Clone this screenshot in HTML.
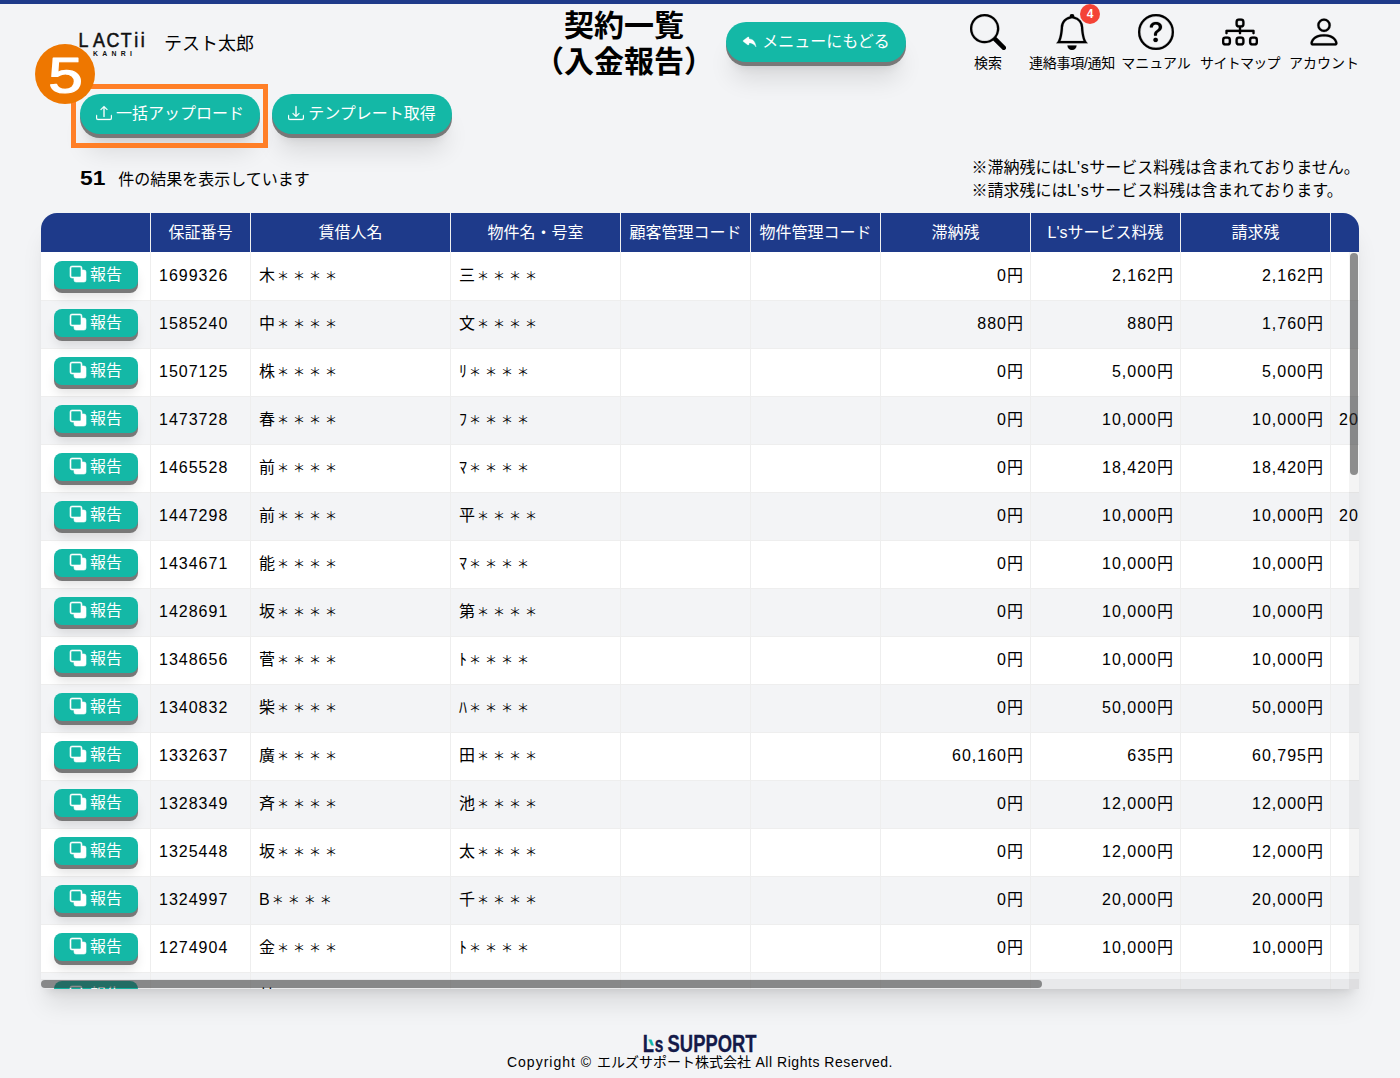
<!DOCTYPE html>
<html lang="ja">
<head>
<meta charset="utf-8">
<title>契約一覧（入金報告）</title>
<style>
*{box-sizing:border-box;}
html,body{margin:0;padding:0;}
body{width:1400px;height:1078px;overflow:hidden;position:relative;background:#f3f4f6;color:#000;
 font-family:"Liberation Sans","Noto Sans CJK JP",sans-serif;font-size:16px;line-height:24px;}
.abs{position:absolute;}
.topbar{left:0;top:0;width:1400px;height:4px;background:#1e3a8a;}
.logo{left:76px;top:28px;width:74px;height:32px;}
.uname{left:164px;top:31px;font-size:18px;line-height:26px;white-space:nowrap;}
.title{left:474px;top:7.500px;width:300px;text-align:center;font-size:30px;line-height:36px;font-weight:bold;color:#000;white-space:nowrap;}
.pill{height:40px;border-radius:20px;background:#14b8a6;color:#fff;white-space:nowrap;
 box-shadow:0 4px 0 #787878,0 22px 25px -5px rgba(0,0,0,.11),0 11px 10px -6px rgba(0,0,0,.1);
 display:flex;align-items:center;justify-content:center;font-size:16px;}
.pill svg{display:block;margin-right:4px;stroke:#fff;stroke-width:.350px;position:relative;top:-1px;}
.menu{left:726px;top:22px;width:180px;}
.up{left:80px;top:94px;width:180px;}
.dl{left:272px;top:94px;width:180px;}
.nav{top:14px;width:120px;text-align:center;font-size:14px;line-height:20px;white-space:nowrap;}
.nav svg{display:block;margin:0 auto 3px;}
.badge{left:1080px;top:3.500px;width:20px;height:20px;border-radius:10px;background:#f44336;color:#fff;font-size:12px;line-height:21px;font-weight:bold;text-align:center;}
.circ{left:35px;top:44px;width:60px;height:60px;border-radius:30px;background:#ee7700;}
.frame{left:71px;top:84px;width:197px;height:64px;border:5px solid #ff7f27;}
.count{left:80px;top:166px;white-space:nowrap;}
.count b{font-size:20px;display:inline-block;transform:scaleX(1.140);transform-origin:0 50%;margin-right:16px;}
.note{left:971.500px;top:157.200px;line-height:22.500px;white-space:nowrap;}
.wrap{left:41px;top:213px;width:1318px;height:776px;overflow:hidden;border-radius:16px 16px 0 0;background:#fff;
 box-shadow:0 20px 25px -5px rgba(0,0,0,.1),0 8px 10px -6px rgba(0,0,0,.1);}
table{border-collapse:separate;border-spacing:0;table-layout:fixed;width:1500px;}
th{height:39px;background:#1e3a8a;color:#fff;font-weight:normal;text-align:center;padding:0;border-right:1px solid #f0f0f0;white-space:nowrap;}
td{height:48px;padding:0 8px 1px;border-right:1px solid #eee;border-top:1px solid #eee;white-space:nowrap;overflow:hidden;}
tr.even td{background:#f3f4f6;}
tbody tr:first-child td{border-top:0;padding-top:1px;}
td.r{text-align:right;padding-right:7px;}
tr.last td.r{padding-top:6px;padding-bottom:0;}
td.c0{padding:0 0 2px 1px;text-align:center;overflow:visible;}
.n{letter-spacing:1px;}
.l{letter-spacing:.540px;}
.ls{letter-spacing:.600px;}
.a{font-size:12px;letter-spacing:4px;margin-left:2px;vertical-align:-.300px;line-height:0;}
.rbtn{display:inline-flex;align-items:center;justify-content:center;width:84px;height:28px;border-radius:8px;background:#14b8a6;color:#fff;
 box-shadow:0 4px 0 #787878,0 10px 12px -2px rgba(0,0,0,.12);position:relative;top:-.500px;vertical-align:middle;}
.rbtn svg{display:block;margin:0 3.500px 0 .500px;width:16px;height:16px;overflow:visible;stroke:#fff;stroke-width:.600px;stroke-linejoin:round;position:relative;top:-.700px;}
.vtrack{left:1308px;top:39px;width:10px;height:737px;background:rgba(0,0,0,.045);}
.vthumb{left:1309px;top:40px;width:8px;height:222px;border-radius:4px;background:rgba(50,50,50,.53);}
.htrack{left:0;top:766px;width:1318px;height:10px;background:rgba(0,0,0,.045);}
.hthumb{left:0;top:767px;width:1001px;height:8px;border-radius:4px;background:rgba(50,50,50,.53);}
.flogo{left:640px;top:1032px;width:120px;height:24px;}
.copy{left:0;top:1052px;width:1400px;text-align:center;font-size:14px;line-height:20px;white-space:nowrap;}
</style>
</head>
<body>
<div class="abs topbar"></div>

<svg class="abs logo" viewBox="0 0 74 32">
 <text transform="scale(.860 1)" x="3 19.900 35.400 52 67.700 75.300" y="19" font-family="Liberation Sans, sans-serif" font-size="20.700" fill="#111" stroke="#111" stroke-width=".600">LACTii</text>
 <text transform="translate(16.900 28) scale(.860 1)" font-family="Liberation Sans, sans-serif" font-size="8" font-weight="bold" fill="#111" textLength="45.300" lengthAdjust="spacing">KANRI</text>
</svg>
<div class="abs uname">テスト太郎</div>

<div class="abs title">契約一覧<br>（入金報告）</div>

<div class="abs pill menu"><svg viewBox="0 0 16 16" width="16" height="16"><path fill="#fff" d="M5.921 11.900 1.353 8.620a.719.719 0 0 1 0-1.238L5.921 4.100A.716.716 0 0 1 7 4.719V6c1.500 0 6 0 7 8-2.500-4.500-7-4-7-4v1.281c0 .56-.606.898-1.079.62z"/></svg><span>メニューにもどる</span></div>

<div class="abs nav" style="left:928px"><svg viewBox="0 0 16 16" width="36" height="36" stroke="#000" stroke-width=".080"><path fill="#000" d="M11.742 10.344a6.500 6.500 0 1 0-1.397 1.398h-.001c.03.040.062.078.098.115l3.850 3.850a1 1 0 0 0 1.415-1.414l-3.850-3.850a1.007 1.007 0 0 0-.115-.100zM12 6.500a5.500 5.500 0 1 1-11 0 5.500 5.500 0 0 1 11 0z"/></svg>検索</div>
<div class="abs nav" style="left:1012px"><svg viewBox="0 0 16 16" width="36" height="36" stroke="#000" stroke-width=".080"><path fill="#000" d="M8 16a2 2 0 0 0 2-2H6a2 2 0 0 0 2 2zM8 1.918l-.797.161A4.002 4.002 0 0 0 4 6c0 .628-.134 2.197-.459 3.742-.16.767-.376 1.566-.663 2.258h10.244c-.287-.692-.502-1.490-.663-2.258C12.134 8.197 12 6.628 12 6a4.002 4.002 0 0 0-3.203-3.920L8 1.917zM14.220 12c.223.447.481.801.780 1H1c.299-.199.557-.553.780-1C2.680 10.200 3 6.880 3 6c0-2.420 1.720-4.440 4.005-4.901a1 1 0 1 1 1.990 0A5.002 5.002 0 0 1 13 6c0 .880.320 4.200 1.220 6z"/></svg><span style="letter-spacing:-.250px">連絡事項/通知</span></div>
<div class="abs nav" style="left:1096px"><svg viewBox="0 0 16 16" width="36" height="36" stroke="#000" stroke-width=".080"><path fill="#000" d="M8 15A7 7 0 1 1 8 1a7 7 0 0 1 0 14zm0 1A8 8 0 1 0 8 0a8 8 0 0 0 0 16z"/><path fill="#000" d="M5.255 5.786a.237.237 0 0 0 .241.247h.825c.138 0 .248-.113.266-.250.090-.656.540-1.134 1.342-1.134.686 0 1.314.343 1.314 1.168 0 .635-.374.927-.965 1.371-.673.489-1.206 1.060-1.168 1.987l.003.217a.250.250 0 0 0 .250.246h.811a.250.250 0 0 0 .250-.250v-.105c0-.718.273-.927 1.010-1.486.609-.463 1.244-.977 1.244-2.056 0-1.511-1.276-2.241-2.673-2.241-1.267 0-2.655.590-2.750 2.286zm1.557 5.763c0 .533.425.927 1.010.927.609 0 1.028-.394 1.028-.927 0-.552-.420-.940-1.029-.940-.584 0-1.009.388-1.009.940z"/></svg>マニュアル</div>
<div class="abs nav" style="left:1180px"><svg viewBox="0 0 16 16" width="36" height="36" stroke="#000" stroke-width=".080"><path fill="#000" fill-rule="evenodd" d="M6 3.500A1.500 1.500 0 0 1 7.500 2h1A1.500 1.500 0 0 1 10 3.500v1A1.500 1.500 0 0 1 8.500 6v1H14a.500.500 0 0 1 .500.500v1a.500.500 0 0 1-1 0V8h-5v.500a.500.500 0 0 1-1 0V8h-5v.500a.500.500 0 0 1-1 0v-1A.500.500 0 0 1 2 7h5.500V6A1.500 1.500 0 0 1 6 4.500v-1zM8.500 5a.500.500 0 0 0 .500-.500v-1a.500.500 0 0 0-.500-.500h-1a.500.500 0 0 0-.500.500v1a.500.500 0 0 0 .500.500h1zM0 11.500A1.500 1.500 0 0 1 1.500 10h1A1.500 1.500 0 0 1 4 11.500v1A1.500 1.500 0 0 1 2.500 14h-1A1.500 1.500 0 0 1 0 12.500v-1zm1.500-.500a.500.500 0 0 0-.500.500v1a.500.500 0 0 0 .500.500h1a.500.500 0 0 0 .500-.500v-1a.500.500 0 0 0-.500-.500h-1zm4.500.500A1.500 1.500 0 0 1 7.500 10h1a1.500 1.500 0 0 1 1.500 1.500v1A1.500 1.500 0 0 1 8.500 14h-1A1.500 1.500 0 0 1 6 12.500v-1zm1.500-.500a.500.500 0 0 0-.500.500v1a.500.500 0 0 0 .500.500h1a.500.500 0 0 0 .500-.500v-1a.500.500 0 0 0-.500-.500h-1zm4.500.500a1.500 1.500 0 0 1 1.500-1.500h1a1.500 1.500 0 0 1 1.500 1.500v1a1.500 1.500 0 0 1-1.500 1.500h-1a1.500 1.500 0 0 1-1.500-1.500v-1zm1.500-.500a.500.500 0 0 0-.500.500v1a.500.500 0 0 0 .500.500h1a.500.500 0 0 0 .500-.500v-1a.500.500 0 0 0-.500-.500h-1z"/></svg><span style="letter-spacing:-.700px">サイトマップ</span></div>
<div class="abs nav" style="left:1264px"><svg viewBox="0 0 16 16" width="36" height="36" stroke="#000" stroke-width=".080"><path fill="#000" d="M8 8a3 3 0 1 0 0-6 3 3 0 0 0 0 6zm2-3a2 2 0 1 1-4 0 2 2 0 0 1 4 0zm4 8c0 1-1 1-1 1H3s-1 0-1-1 1-4 6-4 6 3 6 4zm-1-.004c-.001-.246-.154-.986-.832-1.664C11.516 10.680 10.289 10 8 10c-2.290 0-3.516.680-4.168 1.332-.678.678-.830 1.418-.832 1.664h10z"/></svg>アカウント</div>
<div class="abs badge">4</div>

<div class="abs pill up"><svg viewBox="0 0 16 16" width="16" height="16"><path fill="#fff" d="M.500 9.900a.500.500 0 0 1 .500.500v2.500a1 1 0 0 0 1 1h12a1 1 0 0 0 1-1v-2.500a.500.500 0 0 1 1 0v2.500a2 2 0 0 1-2 2H2a2 2 0 0 1-2-2v-2.500a.500.500 0 0 1 .500-.500z"/><path fill="#fff" d="M7.646 1.146a.500.500 0 0 1 .708 0l3 3a.500.500 0 0 1-.708.708L8.500 2.707V11.500a.500.500 0 0 1-1 0V2.707L5.354 4.854a.500.500 0 1 1-.708-.708l3-3z"/></svg><span>一括アップロード</span></div>
<div class="abs pill dl"><svg viewBox="0 0 16 16" width="16" height="16"><path fill="#fff" d="M.500 9.900a.500.500 0 0 1 .500.500v2.500a1 1 0 0 0 1 1h12a1 1 0 0 0 1-1v-2.500a.500.500 0 0 1 1 0v2.500a2 2 0 0 1-2 2H2a2 2 0 0 1-2-2v-2.500a.500.500 0 0 1 .500-.500z"/><path fill="#fff" d="M7.646 11.854a.500.500 0 0 0 .708 0l3-3a.500.500 0 0 0-.708-.708L8.500 10.293V1.500a.500.500 0 0 0-1 0v8.793L5.354 8.146a.500.500 0 1 0-.708.708l3 3z"/></svg><span>テンプレート取得</span></div>
<div class="abs frame"></div>
<div class="abs circ"></div>
<svg class="abs" style="left:35px;top:44px" width="60" height="60" viewBox="0 0 60 60"><text x="13.200" y="49.300" font-family="Liberation Sans, sans-serif" font-size="50" fill="#fff" stroke="#fff" stroke-width="1.200" stroke-linejoin="round" textLength="34.600" lengthAdjust="spacingAndGlyphs">5</text></svg>

<div class="abs count"><b>51</b>件の結果を表示しています</div>
<div class="abs note">※滞納残には<span class="ls">L's</span>サービス料残は含まれておりません。<br>※請求残には<span class="ls">L's</span>サービス料残は含まれております。</div>

<div class="abs wrap">
<table>
<colgroup><col style="width:110px"><col style="width:100px"><col style="width:200px"><col style="width:170px"><col style="width:130px"><col style="width:130px"><col style="width:150px"><col style="width:150px"><col style="width:150px"><col style="width:210px"></colgroup>
<thead><tr><th></th><th>保証番号</th><th>賃借人名</th><th>物件名・号室</th><th>顧客管理コード</th><th>物件管理コード</th><th>滞納残</th><th>L'sサービス料残</th><th>請求残</th><th></th></tr></thead>
<tbody>
<tr class="odd"><td class="c0"><span class="rbtn"><svg class="bi" viewBox="0 0 16 16" width="16" height="16"><path fill="#fff" d="M0 2a2 2 0 0 1 2-2h8a2 2 0 0 1 2 2v2h2a2 2 0 0 1 2 2v8a2 2 0 0 1-2 2H6a2 2 0 0 1-2-2v-2H2a2 2 0 0 1-2-2V2zm2-1a1 1 0 0 0-1 1v8a1 1 0 0 0 1 1h8a1 1 0 0 0 1-1V2a1 1 0 0 0-1-1H2z"/></svg><span class="rt">報告</span></span></td><td class="c1"><span class="n">1699326</span></td><td class="c2">木<span class="a">＊＊＊＊</span></td><td class="c3">三<span class="a">＊＊＊＊</span></td><td class="c4"></td><td class="c5"></td><td class="r"><span class="n">0</span>円</td><td class="r"><span class="n">2,162</span>円</td><td class="r"><span class="n">2,162</span>円</td><td class="c9"><span class="n"></span></td></tr>
<tr class="even"><td class="c0"><span class="rbtn"><svg class="bi" viewBox="0 0 16 16" width="16" height="16"><path fill="#fff" d="M0 2a2 2 0 0 1 2-2h8a2 2 0 0 1 2 2v2h2a2 2 0 0 1 2 2v8a2 2 0 0 1-2 2H6a2 2 0 0 1-2-2v-2H2a2 2 0 0 1-2-2V2zm2-1a1 1 0 0 0-1 1v8a1 1 0 0 0 1 1h8a1 1 0 0 0 1-1V2a1 1 0 0 0-1-1H2z"/></svg><span class="rt">報告</span></span></td><td class="c1"><span class="n">1585240</span></td><td class="c2">中<span class="a">＊＊＊＊</span></td><td class="c3">文<span class="a">＊＊＊＊</span></td><td class="c4"></td><td class="c5"></td><td class="r"><span class="n">880</span>円</td><td class="r"><span class="n">880</span>円</td><td class="r"><span class="n">1,760</span>円</td><td class="c9"><span class="n"></span></td></tr>
<tr class="odd"><td class="c0"><span class="rbtn"><svg class="bi" viewBox="0 0 16 16" width="16" height="16"><path fill="#fff" d="M0 2a2 2 0 0 1 2-2h8a2 2 0 0 1 2 2v2h2a2 2 0 0 1 2 2v8a2 2 0 0 1-2 2H6a2 2 0 0 1-2-2v-2H2a2 2 0 0 1-2-2V2zm2-1a1 1 0 0 0-1 1v8a1 1 0 0 0 1 1h8a1 1 0 0 0 1-1V2a1 1 0 0 0-1-1H2z"/></svg><span class="rt">報告</span></span></td><td class="c1"><span class="n">1507125</span></td><td class="c2">株<span class="a">＊＊＊＊</span></td><td class="c3">ﾘ<span class="a">＊＊＊＊</span></td><td class="c4"></td><td class="c5"></td><td class="r"><span class="n">0</span>円</td><td class="r"><span class="n">5,000</span>円</td><td class="r"><span class="n">5,000</span>円</td><td class="c9"><span class="n"></span></td></tr>
<tr class="even"><td class="c0"><span class="rbtn"><svg class="bi" viewBox="0 0 16 16" width="16" height="16"><path fill="#fff" d="M0 2a2 2 0 0 1 2-2h8a2 2 0 0 1 2 2v2h2a2 2 0 0 1 2 2v8a2 2 0 0 1-2 2H6a2 2 0 0 1-2-2v-2H2a2 2 0 0 1-2-2V2zm2-1a1 1 0 0 0-1 1v8a1 1 0 0 0 1 1h8a1 1 0 0 0 1-1V2a1 1 0 0 0-1-1H2z"/></svg><span class="rt">報告</span></span></td><td class="c1"><span class="n">1473728</span></td><td class="c2">春<span class="a">＊＊＊＊</span></td><td class="c3">ﾌ<span class="a">＊＊＊＊</span></td><td class="c4"></td><td class="c5"></td><td class="r"><span class="n">0</span>円</td><td class="r"><span class="n">10,000</span>円</td><td class="r"><span class="n">10,000</span>円</td><td class="c9"><span class="n">2024/</span></td></tr>
<tr class="odd"><td class="c0"><span class="rbtn"><svg class="bi" viewBox="0 0 16 16" width="16" height="16"><path fill="#fff" d="M0 2a2 2 0 0 1 2-2h8a2 2 0 0 1 2 2v2h2a2 2 0 0 1 2 2v8a2 2 0 0 1-2 2H6a2 2 0 0 1-2-2v-2H2a2 2 0 0 1-2-2V2zm2-1a1 1 0 0 0-1 1v8a1 1 0 0 0 1 1h8a1 1 0 0 0 1-1V2a1 1 0 0 0-1-1H2z"/></svg><span class="rt">報告</span></span></td><td class="c1"><span class="n">1465528</span></td><td class="c2">前<span class="a">＊＊＊＊</span></td><td class="c3">ﾏ<span class="a">＊＊＊＊</span></td><td class="c4"></td><td class="c5"></td><td class="r"><span class="n">0</span>円</td><td class="r"><span class="n">18,420</span>円</td><td class="r"><span class="n">18,420</span>円</td><td class="c9"><span class="n"></span></td></tr>
<tr class="even"><td class="c0"><span class="rbtn"><svg class="bi" viewBox="0 0 16 16" width="16" height="16"><path fill="#fff" d="M0 2a2 2 0 0 1 2-2h8a2 2 0 0 1 2 2v2h2a2 2 0 0 1 2 2v8a2 2 0 0 1-2 2H6a2 2 0 0 1-2-2v-2H2a2 2 0 0 1-2-2V2zm2-1a1 1 0 0 0-1 1v8a1 1 0 0 0 1 1h8a1 1 0 0 0 1-1V2a1 1 0 0 0-1-1H2z"/></svg><span class="rt">報告</span></span></td><td class="c1"><span class="n">1447298</span></td><td class="c2">前<span class="a">＊＊＊＊</span></td><td class="c3">平<span class="a">＊＊＊＊</span></td><td class="c4"></td><td class="c5"></td><td class="r"><span class="n">0</span>円</td><td class="r"><span class="n">10,000</span>円</td><td class="r"><span class="n">10,000</span>円</td><td class="c9"><span class="n">2024/</span></td></tr>
<tr class="odd"><td class="c0"><span class="rbtn"><svg class="bi" viewBox="0 0 16 16" width="16" height="16"><path fill="#fff" d="M0 2a2 2 0 0 1 2-2h8a2 2 0 0 1 2 2v2h2a2 2 0 0 1 2 2v8a2 2 0 0 1-2 2H6a2 2 0 0 1-2-2v-2H2a2 2 0 0 1-2-2V2zm2-1a1 1 0 0 0-1 1v8a1 1 0 0 0 1 1h8a1 1 0 0 0 1-1V2a1 1 0 0 0-1-1H2z"/></svg><span class="rt">報告</span></span></td><td class="c1"><span class="n">1434671</span></td><td class="c2">能<span class="a">＊＊＊＊</span></td><td class="c3">ﾏ<span class="a">＊＊＊＊</span></td><td class="c4"></td><td class="c5"></td><td class="r"><span class="n">0</span>円</td><td class="r"><span class="n">10,000</span>円</td><td class="r"><span class="n">10,000</span>円</td><td class="c9"><span class="n"></span></td></tr>
<tr class="even"><td class="c0"><span class="rbtn"><svg class="bi" viewBox="0 0 16 16" width="16" height="16"><path fill="#fff" d="M0 2a2 2 0 0 1 2-2h8a2 2 0 0 1 2 2v2h2a2 2 0 0 1 2 2v8a2 2 0 0 1-2 2H6a2 2 0 0 1-2-2v-2H2a2 2 0 0 1-2-2V2zm2-1a1 1 0 0 0-1 1v8a1 1 0 0 0 1 1h8a1 1 0 0 0 1-1V2a1 1 0 0 0-1-1H2z"/></svg><span class="rt">報告</span></span></td><td class="c1"><span class="n">1428691</span></td><td class="c2">坂<span class="a">＊＊＊＊</span></td><td class="c3">第<span class="a">＊＊＊＊</span></td><td class="c4"></td><td class="c5"></td><td class="r"><span class="n">0</span>円</td><td class="r"><span class="n">10,000</span>円</td><td class="r"><span class="n">10,000</span>円</td><td class="c9"><span class="n"></span></td></tr>
<tr class="odd"><td class="c0"><span class="rbtn"><svg class="bi" viewBox="0 0 16 16" width="16" height="16"><path fill="#fff" d="M0 2a2 2 0 0 1 2-2h8a2 2 0 0 1 2 2v2h2a2 2 0 0 1 2 2v8a2 2 0 0 1-2 2H6a2 2 0 0 1-2-2v-2H2a2 2 0 0 1-2-2V2zm2-1a1 1 0 0 0-1 1v8a1 1 0 0 0 1 1h8a1 1 0 0 0 1-1V2a1 1 0 0 0-1-1H2z"/></svg><span class="rt">報告</span></span></td><td class="c1"><span class="n">1348656</span></td><td class="c2">菅<span class="a">＊＊＊＊</span></td><td class="c3">ﾄ<span class="a">＊＊＊＊</span></td><td class="c4"></td><td class="c5"></td><td class="r"><span class="n">0</span>円</td><td class="r"><span class="n">10,000</span>円</td><td class="r"><span class="n">10,000</span>円</td><td class="c9"><span class="n"></span></td></tr>
<tr class="even"><td class="c0"><span class="rbtn"><svg class="bi" viewBox="0 0 16 16" width="16" height="16"><path fill="#fff" d="M0 2a2 2 0 0 1 2-2h8a2 2 0 0 1 2 2v2h2a2 2 0 0 1 2 2v8a2 2 0 0 1-2 2H6a2 2 0 0 1-2-2v-2H2a2 2 0 0 1-2-2V2zm2-1a1 1 0 0 0-1 1v8a1 1 0 0 0 1 1h8a1 1 0 0 0 1-1V2a1 1 0 0 0-1-1H2z"/></svg><span class="rt">報告</span></span></td><td class="c1"><span class="n">1340832</span></td><td class="c2">柴<span class="a">＊＊＊＊</span></td><td class="c3">ﾊ<span class="a">＊＊＊＊</span></td><td class="c4"></td><td class="c5"></td><td class="r"><span class="n">0</span>円</td><td class="r"><span class="n">50,000</span>円</td><td class="r"><span class="n">50,000</span>円</td><td class="c9"><span class="n"></span></td></tr>
<tr class="odd"><td class="c0"><span class="rbtn"><svg class="bi" viewBox="0 0 16 16" width="16" height="16"><path fill="#fff" d="M0 2a2 2 0 0 1 2-2h8a2 2 0 0 1 2 2v2h2a2 2 0 0 1 2 2v8a2 2 0 0 1-2 2H6a2 2 0 0 1-2-2v-2H2a2 2 0 0 1-2-2V2zm2-1a1 1 0 0 0-1 1v8a1 1 0 0 0 1 1h8a1 1 0 0 0 1-1V2a1 1 0 0 0-1-1H2z"/></svg><span class="rt">報告</span></span></td><td class="c1"><span class="n">1332637</span></td><td class="c2">廣<span class="a">＊＊＊＊</span></td><td class="c3">田<span class="a">＊＊＊＊</span></td><td class="c4"></td><td class="c5"></td><td class="r"><span class="n">60,160</span>円</td><td class="r"><span class="n">635</span>円</td><td class="r"><span class="n">60,795</span>円</td><td class="c9"><span class="n"></span></td></tr>
<tr class="even"><td class="c0"><span class="rbtn"><svg class="bi" viewBox="0 0 16 16" width="16" height="16"><path fill="#fff" d="M0 2a2 2 0 0 1 2-2h8a2 2 0 0 1 2 2v2h2a2 2 0 0 1 2 2v8a2 2 0 0 1-2 2H6a2 2 0 0 1-2-2v-2H2a2 2 0 0 1-2-2V2zm2-1a1 1 0 0 0-1 1v8a1 1 0 0 0 1 1h8a1 1 0 0 0 1-1V2a1 1 0 0 0-1-1H2z"/></svg><span class="rt">報告</span></span></td><td class="c1"><span class="n">1328349</span></td><td class="c2">斉<span class="a">＊＊＊＊</span></td><td class="c3">池<span class="a">＊＊＊＊</span></td><td class="c4"></td><td class="c5"></td><td class="r"><span class="n">0</span>円</td><td class="r"><span class="n">12,000</span>円</td><td class="r"><span class="n">12,000</span>円</td><td class="c9"><span class="n"></span></td></tr>
<tr class="odd"><td class="c0"><span class="rbtn"><svg class="bi" viewBox="0 0 16 16" width="16" height="16"><path fill="#fff" d="M0 2a2 2 0 0 1 2-2h8a2 2 0 0 1 2 2v2h2a2 2 0 0 1 2 2v8a2 2 0 0 1-2 2H6a2 2 0 0 1-2-2v-2H2a2 2 0 0 1-2-2V2zm2-1a1 1 0 0 0-1 1v8a1 1 0 0 0 1 1h8a1 1 0 0 0 1-1V2a1 1 0 0 0-1-1H2z"/></svg><span class="rt">報告</span></span></td><td class="c1"><span class="n">1325448</span></td><td class="c2">坂<span class="a">＊＊＊＊</span></td><td class="c3">太<span class="a">＊＊＊＊</span></td><td class="c4"></td><td class="c5"></td><td class="r"><span class="n">0</span>円</td><td class="r"><span class="n">12,000</span>円</td><td class="r"><span class="n">12,000</span>円</td><td class="c9"><span class="n"></span></td></tr>
<tr class="even"><td class="c0"><span class="rbtn"><svg class="bi" viewBox="0 0 16 16" width="16" height="16"><path fill="#fff" d="M0 2a2 2 0 0 1 2-2h8a2 2 0 0 1 2 2v2h2a2 2 0 0 1 2 2v8a2 2 0 0 1-2 2H6a2 2 0 0 1-2-2v-2H2a2 2 0 0 1-2-2V2zm2-1a1 1 0 0 0-1 1v8a1 1 0 0 0 1 1h8a1 1 0 0 0 1-1V2a1 1 0 0 0-1-1H2z"/></svg><span class="rt">報告</span></span></td><td class="c1"><span class="n">1324997</span></td><td class="c2">B<span class="a">＊＊＊＊</span></td><td class="c3">千<span class="a">＊＊＊＊</span></td><td class="c4"></td><td class="c5"></td><td class="r"><span class="n">0</span>円</td><td class="r"><span class="n">20,000</span>円</td><td class="r"><span class="n">20,000</span>円</td><td class="c9"><span class="n"></span></td></tr>
<tr class="odd"><td class="c0"><span class="rbtn"><svg class="bi" viewBox="0 0 16 16" width="16" height="16"><path fill="#fff" d="M0 2a2 2 0 0 1 2-2h8a2 2 0 0 1 2 2v2h2a2 2 0 0 1 2 2v8a2 2 0 0 1-2 2H6a2 2 0 0 1-2-2v-2H2a2 2 0 0 1-2-2V2zm2-1a1 1 0 0 0-1 1v8a1 1 0 0 0 1 1h8a1 1 0 0 0 1-1V2a1 1 0 0 0-1-1H2z"/></svg><span class="rt">報告</span></span></td><td class="c1"><span class="n">1274904</span></td><td class="c2">金<span class="a">＊＊＊＊</span></td><td class="c3">ﾄ<span class="a">＊＊＊＊</span></td><td class="c4"></td><td class="c5"></td><td class="r"><span class="n">0</span>円</td><td class="r"><span class="n">10,000</span>円</td><td class="r"><span class="n">10,000</span>円</td><td class="c9"><span class="n"></span></td></tr>
<tr class="even last"><td class="c0"><span class="rbtn"><svg class="bi" viewBox="0 0 16 16" width="16" height="16"><path fill="#fff" d="M0 2a2 2 0 0 1 2-2h8a2 2 0 0 1 2 2v2h2a2 2 0 0 1 2 2v8a2 2 0 0 1-2 2H6a2 2 0 0 1-2-2v-2H2a2 2 0 0 1-2-2V2zm2-1a1 1 0 0 0-1 1v8a1 1 0 0 0 1 1h8a1 1 0 0 0 1-1V2a1 1 0 0 0-1-1H2z"/></svg><span class="rt">報告</span></span></td><td class="c1"><span class="n">1270113</span></td><td class="c2">林<span class="a">＊＊＊＊</span></td><td class="c3">ﾊ<span class="a">＊＊＊＊</span></td><td class="c4"></td><td class="c5"></td><td class="r"><span class="n">0</span>円</td><td class="r"><span class="n">10,000</span>円</td><td class="r"><span class="n">10,000</span>円</td><td class="c9"><span class="n"></span></td></tr>
</tbody>
</table>
<div class="abs vtrack"></div><div class="abs vthumb"></div>
<div class="abs htrack"></div><div class="abs hthumb"></div>
</div>

<svg class="abs flogo" viewBox="0 0 120 24">
 <g font-family="Liberation Sans, sans-serif" font-weight="bold" fill="#141a49" stroke="#141a49" stroke-width=".300">
  <text transform="translate(2.700 20.200) scale(.800 1)" font-size="23">L</text>
  <text transform="translate(14.800 20.200) scale(.720 1)" font-size="21.500">s</text>
  <text transform="translate(27.600 20.200) scale(.800 1)" font-size="23">SUPPORT</text>
 </g>
 <text transform="translate(14.200 23.500) skewX(24)" font-family="Liberation Sans, sans-serif" font-weight="bold" font-size="24" fill="#14b8a6">'</text>
</svg>
<div class="abs copy"><span class="l" style="letter-spacing:1px">Copyright © </span>エルズサポート株式会社<span class="l"> All Rights Reserved.</span></div>
</body>
</html>
